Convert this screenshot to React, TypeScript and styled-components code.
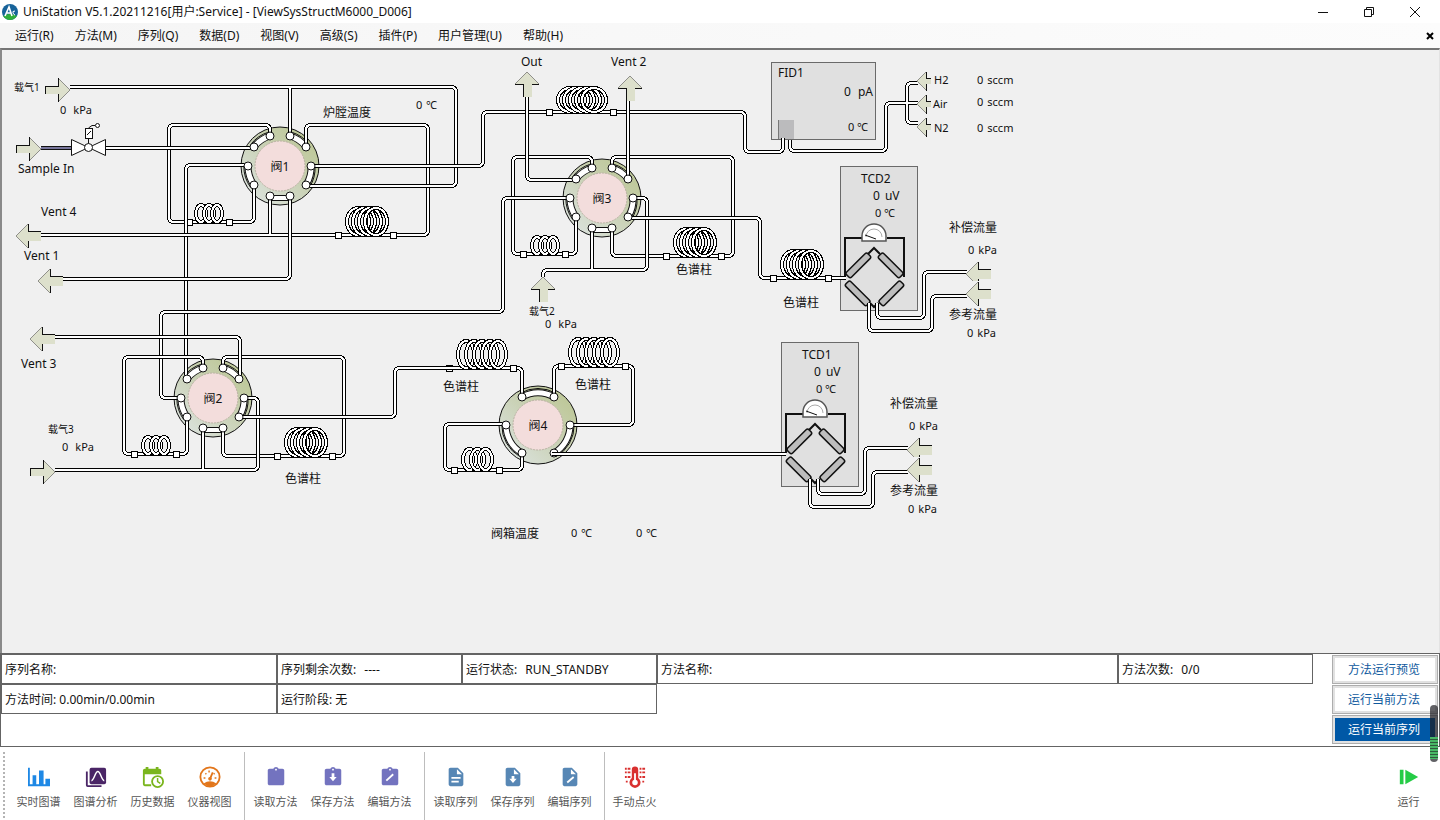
import React from "react";
import styled, { createGlobalStyle, css } from "styled-components";

const GlobalStyle = createGlobalStyle`
  * { box-sizing: border-box; }
  body {
    margin: 0;
    background: #fff;
    color: #111;
    font-family: "Noto Sans", "Noto Sans CJK SC", sans-serif;
    font-size: 12px;
    line-height: 16px;
  }
  button { font: inherit; color: inherit; cursor: pointer; }
`;

/* ---------- window frame ---------- */

const Window = styled.div`
  display: flex;
  flex-direction: column;
  min-height: 100vh;
`;

const TitleBar = styled.header`
  display: flex;
  align-items: center;
  height: 23px;
  padding-left: 2px;
  background: #fff;
`;

const Title = styled.h1`
  flex: 1;
  margin: 0 0 0 5px;
  font-size: 12px;
  line-height: 16px;
  font-weight: 400;
  white-space: nowrap;
`;

const WindowButton = styled.button`
  display: grid;
  place-items: center;
  width: 46px;
  height: 22px;
  padding: 0;
  border: 0;
  background: none;
`;

const WindowButtons = styled.div`
  display: flex;
  margin-right: 2px;
`;

const MenuBar = styled.nav`
  display: flex;
  align-items: center;
  gap: 1px;
  height: 25px;
  padding: 0 4px 0 5px;
  background: linear-gradient(90deg, #f5f5f5, #fcfcfc);
`;

const MenuButton = styled.button`
  padding: 0 10px;
  border: 0;
  background: none;
  white-space: nowrap;
`;

const CloseView = styled.button`
  display: grid;
  place-items: center;
  width: 12px;
  height: 16px;
  margin-left: auto;
  padding: 0;
  border: 0;
  background: none;
`;

/* ---------- flow diagram ---------- */

const Workspace = styled.main`
  position: relative;
  flex: 1 0 500px;
  border-top: 2px solid #757575;
  border-left: 2px solid #8a8a8a;
  border-right: 1px solid #e3e3e3;
  background: #f0f0f0;
  overflow: hidden;
`;

/* Diagram coordinates of the workspace's inner top left corner. */
const ORIGIN = { x: 2, y: 50 };

type At = { $x: number; $y: number };
const placed = css<At>`
  position: absolute;
  left: ${(p) => p.$x - ORIGIN.x}px;
  top: ${(p) => p.$y - ORIGIN.y}px;
`;

const Drawing = styled.svg`
  position: absolute;
  left: 0;
  top: 0;
`;

const Label = styled.span<At & { $size?: number }>`
  ${placed}
  margin-top: -8px;
  font-size: ${(p) => p.$size ?? 12}px;
  white-space: nowrap;
`;

const ValveName = styled(Label)`
  width: 50px;
  margin-left: -25px;
  text-align: center;
`;

const ReadingBox = styled.span<At & { $gap: number; $size: number }>`
  ${placed}
  display: flex;
  gap: ${(p) => p.$gap}px;
  margin-top: -8px;
  font-size: ${(p) => p.$size}px;
  white-space: nowrap;
`;

const Detector = styled.section<At & { $w: number; $h: number }>`
  ${placed}
  width: ${(p) => p.$w}px;
  height: ${(p) => p.$h}px;
  border: 1px solid #6a6a6a;
  background: #e0e0e0;
`;

type ReadingProps = { x: number; y: number; unit: string; gap?: number; size?: number };
const Reading = ({ x, y, unit, gap = 4, size = 11 }: ReadingProps) => (
  <ReadingBox $x={x} $y={y} $gap={gap} $size={size}>
    <span>0</span>
    <span>{unit}</span>
  </ReadingBox>
);

type Point = [number, number];

/* Turns a list of corners into a path whose bends are rounded. */
const bend = (pts: Point[], r = 5) => {
  let d = `M${pts[0][0]} ${pts[0][1]}`;
  for (let i = 1; i < pts.length - 1; i++) {
    const [px, py] = pts[i - 1];
    const [x, y] = pts[i];
    const [nx, ny] = pts[i + 1];
    const a = Math.min(r, Math.hypot(px - x, py - y));
    const b = Math.min(r, Math.hypot(nx - x, ny - y));
    d += `L${x + Math.sign(px - x) * a} ${y + Math.sign(py - y) * a}`;
    d += `Q${x} ${y} ${x + Math.sign(nx - x) * b} ${y + Math.sign(ny - y) * b}`;
  }
  const [ex, ey] = pts[pts.length - 1];
  return `${d}L${ex} ${ey}`;
};

/* Lines of one pipe share their inside, so branches open into each other. */
const Pipe = ({ lines }: { lines: Point[][] }) => (
  <g fill="none">
    {lines.map((l, i) => (
      <path key={i} d={bend(l)} stroke="#000" strokeWidth="4" />
    ))}
    {lines.map((l, i) => (
      <path key={i} d={bend(l)} stroke="#fff" strokeWidth="2" />
    ))}
  </g>
);

type CoilProps = { x: number; y: number; w: number; h: number; rings: number; ring: number };
const Coil = ({ x, y, w, h, rings, ring }: CoilProps) => {
  const step = (w - ring) / (rings - 1);
  return (
    <g fill="none">
      {Array.from({ length: rings }, (_, i) => {
        const e = {
          cx: x + ring / 2 + i * step,
          cy: y + h / 2,
          rx: ring / 2 - 2,
          ry: h / 2 - 2,
        };
        return (
          <g key={i}>
            <ellipse {...e} stroke="#000" strokeWidth="4" />
            <ellipse {...e} stroke="#fff" strokeWidth="2" />
          </g>
        );
      })}
    </g>
  );
};

const Joint = ({ x, y }: { x: number; y: number }) => (
  <rect x={x - 2.5} y={y - 2.5} width="6" height="6" fill="#fff" stroke="#000" />
);

type Dir = "left" | "right" | "up";
const Arrow = ({ x, y, dir, clip }: { x: number; y: number; dir: Dir; clip?: boolean }) => {
  const h = clip ? 19 : 24;
  if (dir === "right")
    return (
      <g transform={`translate(${x} ${y})`}>
        <path d="M0 8H13V0L25 12L13 24V16H0Z" fill="#dde0cc" />
        <path d="M13 0L25 12L13 24" fill="none" stroke="#8f8f8a" />
        <path d="M.5 16V8.500H13.500V0M13.500 16V24" fill="none" stroke="#111" />
      </g>
    );
  if (dir === "left")
    return (
      <g transform={`translate(${x} ${y})`}>
        <path d={clip ? "M0 12L12 0V7H25V17H12V19H7Z" : "M0 12L12 0V7H25V17H12V24Z"} fill="#dde0cc" />
        <path d={clip ? "M12 0L0 12L7 19" : "M12 0L0 12L12 24"} fill="none" stroke="#8f8f8a" />
        <path d={`M12.500 0V7.500H25M12.500 17V${h}`} fill="none" stroke="#111" />
      </g>
    );
  return (
    <g transform={`translate(${x} ${y})`}>
      <path d="M12 0L24 12H17V25H8V12H0Z" fill="#dde0cc" />
      <path d="M0 12L12 0L24 12" fill="none" stroke="#8f8f8a" />
      <path d="M0 12.500H8.500V25M17 12.500H24" fill="none" stroke="#111" />
    </g>
  );
};

const SmallArrow = ({ y }: { y: number }) => (
  <g transform={`translate(917 ${y})`}>
    <path d="M0 9L9 0V6H14V12H9V19Z" fill="#dde0cc" />
    <path d="M9 0L0 9L9 18" fill="none" stroke="#8f8f8a" />
    <path d="M9.500 0V6.500H14M9.500 12V19" fill="none" stroke="#111" />
  </g>
);

const TEN_PORTS: Point[] = [
  [-10, -30], [10, -30], [26, -19], [31, 0], [26, 19],
  [10, 30], [-10, 30], [-26, 19], [-32, 0], [-26, -19],
];
const TEN_SLOTS = [[9, 0], [1, 2], [3, 4], [7, 8]];
const SIX_PORTS: Point[] = [[-16, -28], [16, -28], [32, 0], [16, 28], [-16, 28], [-32, 0]];
const SIX_SLOTS = [[0, 1], [2, 3], [4, 5]];

const Valve = ({ x, y, six }: { x: number; y: number; six?: boolean }) => {
  const ports = six ? SIX_PORTS : TEN_PORTS;
  const slots = six ? SIX_SLOTS : TEN_SLOTS;
  const arc = (a: Point, b: Point, k: number, r: number) =>
    `M${a[0] * k} ${a[1] * k}A${r} ${r} 0 0 1 ${b[0] * k} ${b[1] * k}`;
  return (
    <g transform={`translate(${x} ${y})`} fill="none">
      <circle r="39" fill="url(#body)" stroke="#111" />
      {slots.map(([a, b], i) => (
        <g key={i}>
          <path d={arc(ports[a], ports[b], 1.13, 36)} stroke="#111" />
          <path d={arc(ports[a], ports[b], 1, 32)} stroke="#111" strokeWidth="7" />
          <path d={arc(ports[a], ports[b], 1, 32)} stroke="#fff" strokeWidth="5" />
        </g>
      ))}
      {!six && <rect x="-8" y="29.500" width="16" height="5" fill="#fff" stroke="#111" />}
      <circle r="25" fill="#f3dddc" stroke="#bdb3a6" strokeDasharray="2 1" />
    </g>
  );
};

const Ports = ({ x, y, six }: { x: number; y: number; six?: boolean }) => (
  <g fill="#fff" stroke="#111">
    {(six ? SIX_PORTS : TEN_PORTS).map(([dx, dy], i) => (
      <circle key={i} cx={x + dx} cy={y + dy} r="4" />
    ))}
  </g>
);

/* Measuring bridge of a thermal conductivity detector with its meter. */
const Bridge = ({ x, y }: { x: number; y: number }) => (
  <g transform={`translate(${x} ${y})`} stroke="#111" fill="none" shapeRendering="auto">
    <path d="M22 72H5V111M47 72H64V111" strokeWidth="2" />
    <path d="M28 88L34 82L40 88M30 137L34 141L38 137" strokeWidth="2" />
    {[[18, 99, -45], [51, 99, 45], [18, 127, 45], [51, 127, -45]].map(([cx, cy, a]) => (
      <rect
        key={`${cx}-${cy}`}
        x="-15"
        y="-3"
        width="30"
        height="7"
        rx="2"
        fill="#bdbdbd"
        strokeWidth="1.500"
        transform={`translate(${cx} ${cy}) rotate(${a})`}
      />
    ))}
    <path d="M22 75V70A12 12 0 0 1 46 70V75Z" fill="#fff" stroke="#555" strokeWidth="1.500" />
    <path d="M26 71A8 8 0 0 1 42 71" stroke="#aaa" />
    <path d="M25 69L36 73" />
  </g>
);

const JOINTS: Point[] = [
  [229, 222], [338, 235], [393, 235], [549, 112], [613, 112],
  [523, 254], [565, 254], [721, 256], [666, 256], [773, 278], [828, 278],
  [134, 454], [176, 454], [332, 456], [277, 456], [513, 368],
  [561, 366], [625, 366], [454, 470], [499, 470],
];

const FlowDrawing = () => (
  <Drawing width="1040" height="480" viewBox="2 50 1040 480" shapeRendering="crispEdges" aria-hidden="true">
    <defs>
      <linearGradient id="body" x1="0" y1="1" x2="1" y2="0">
        <stop offset="0.150" stopColor="#d9e0d8" />
        <stop offset="0.550" stopColor="#c8d0b2" />
        <stop offset="1" stopColor="#b9c48d" />
      </linearGradient>
    </defs>

    <rect x="778" y="120" width="16" height="19" fill="#bbbbbd" />
    <path d="M778.500 120V139" stroke="#777" />

    <g shapeRendering="auto">
      <Valve x={280} y={166} />
      <Valve x={213} y={398} />
      <Valve x={602} y={198} />
      <Valve x={538} y={425} six />
    </g>
    <Bridge x={840} y={166} />
    <Bridge x={781} y={342} />

    {/* joints that a later pipe runs over */}
    <Joint x={449} y={368} />

    <Pipe lines={[[[270, 137], [270, 125], [169, 125], [169, 222], [254, 222], [254, 187]]]} />
    <Joint x={189} y={222} />
    <Pipe lines={[[[246, 165], [186, 165], [186, 382]]]} />
    <Pipe lines={[[[41, 235], [428, 235], [428, 125], [306, 125], [306, 147]], [[270, 198], [270, 236]]]} />
    <Pipe lines={[[[290, 198], [290, 279], [61, 279]]]} />
    <Pipe lines={[[[70, 87], [456, 87], [456, 186], [306, 186]], [[290, 87], [290, 136]]]} />
    <Pipe lines={[[[105, 148], [253, 148]]]} />
    <Pipe lines={[[[312, 166], [483, 166], [483, 112], [745, 112], [745, 152], [783, 152], [783, 138]]]} />
    <Pipe
      lines={[
        [[790, 140], [790, 151], [886, 151], [886, 103], [918, 103]],
        [[918, 83], [907, 83], [907, 123], [918, 123]],
      ]}
    />

    <Pipe lines={[[[592, 168], [592, 157], [513, 157], [513, 254], [576, 254], [576, 219]]]} />
    <Pipe lines={[[[612, 168], [612, 157], [733, 157], [733, 256], [612, 256], [612, 230]]]} />
    <Pipe lines={[[[527, 97], [527, 180], [574, 180]]]} />
    <Pipe lines={[[[628, 101], [628, 180]]]} />
    <Pipe lines={[[[635, 198], [647, 198], [647, 270], [543, 270], [543, 277]], [[592, 230], [592, 271]]]} />
    <Pipe lines={[[[628, 218], [760, 218], [760, 278], [846, 278]]]} />
    <Pipe lines={[[[569, 198], [503, 198], [503, 312], [161, 312], [161, 398], [180, 398]]]} />

    <Pipe lines={[[[203, 368], [203, 357], [124, 357], [124, 454], [187, 454], [187, 419]]]} />
    <Pipe lines={[[[223, 368], [223, 357], [344, 357], [344, 456], [223, 456], [223, 430]]]} />
    <Pipe lines={[[[55, 337], [240, 337], [240, 381]]]} />
    <Pipe lines={[[[246, 398], [258, 398], [258, 470], [55, 470]], [[203, 430], [203, 471]]]} />
    <Pipe lines={[[[239, 417], [395, 417], [395, 368], [522, 368], [522, 396]]]} />

    <Pipe lines={[[[554, 396], [554, 366], [633, 366], [633, 425], [571, 425]]]} />
    <Pipe lines={[[[505, 424], [445, 424], [445, 470], [522, 470], [522, 454]]]} />
    <g shapeRendering="auto">
      <Ports x={280} y={166} />
      <Ports x={213} y={398} />
      <Ports x={602} y={198} />
      <Ports x={538} y={425} six />
    </g>
    <Pipe lines={[[[552, 454], [786, 454]]]} />

    {[[0, 0], [59, -176]].map(([dx, dy]) => (
      <g key={dx} transform={`translate(${dx} ${dy})`}>
        <Pipe lines={[[[810, 479], [810, 507], [873, 507], [873, 472], [908, 472]]]} />
        <Pipe lines={[[[818, 479], [818, 494], [865, 494], [865, 448], [908, 448]]]} />
        <Arrow x={907} y={438} dir="left" clip />
        <Arrow x={907} y={458} dir="left" />
      </g>
    ))}

    {JOINTS.map(([x, y]) => (
      <Joint key={`${x}-${y}`} x={x} y={y} />
    ))}

    <Coil x={194} y={203} w={30} h={21} rings={3} ring={14} />
    <Coil x={345} y={206} w={44} h={31} rings={4} ring={26} />
    <Coil x={556} y={86} w={52} h={28} rings={5} ring={28} />
    <Coil x={530} y={235} w={30} h={21} rings={3} ring={14} />
    <Coil x={673} y={227} w={44} h={31} rings={4} ring={26} />
    <Coil x={780} y={249} w={44} h={31} rings={4} ring={26} />
    <Coil x={141} y={435} w={30} h={21} rings={3} ring={14} />
    <Coil x={284} y={427} w={44} h={31} rings={4} ring={26} />
    <Coil x={456} y={339} w={52} h={31} rings={5} ring={20} />
    <Coil x={568} y={337} w={52} h={31} rings={5} ring={20} />
    <Coil x={461} y={447} w={33} h={25} rings={3} ring={17} />

    <Arrow x={45} y={78} dir="right" />
    <Arrow x={16} y={137} dir="right" />
    <Arrow x={30} y={460} dir="right" />
    <Arrow x={16} y={224} dir="left" />
    <Arrow x={38} y={269} dir="left" />
    <Arrow x={30} y={327} dir="left" />
    <Arrow x={515} y={72} dir="up" />
    <Arrow x={618} y={76} dir="up" />
    <Arrow x={531} y={277} dir="up" />
    <SmallArrow y={72} />
    <SmallArrow y={95} />
    <SmallArrow y={118} />

    <path d="M41 146.500H71M41 149.500H71" stroke="#111" />
    <path d="M41 148H71" stroke="#77759b" strokeWidth="2" />
    <g fill="#fff" stroke="#111" shapeRendering="auto">
      <path d="M71.500 139.500L105.500 155.500V139.500L71.500 155.500Z" />
      <path d="M88.500 144V128L92 125.500H95" fill="none" />
      <rect x="85.500" y="128.500" width="7" height="10" />
      <path d="M87 135L91 131" />
      <circle cx="97.500" cy="125.500" r="2" />
      <circle cx="88.500" cy="147.500" r="4" />
    </g>
  </Drawing>
);

/* Text beside the two thermal conductivity detectors. */
const ConductivityTexts = ({ name, x, y }: { name: string; x: number; y: number }) => (
  <>
    <Label $x={x + 21} $y={y + 13}>{name}</Label>
    <Reading x={x + 33} y={y + 30} unit="uV" gap={5} size={12} />
    <Reading x={x + 35} y={y + 47} unit="℃" gap={3} />
    <Label $x={x + 109} $y={y + 62}>补偿流量</Label>
    <Reading x={x + 128} y={y + 84} unit="kPa" />
    <Label $x={x + 109} $y={y + 149}>参考流量</Label>
    <Reading x={x + 127} y={y + 167} unit="kPa" />
  </>
);

const LABELS: { t: string; x: number; y: number; size?: number }[] = [
  { t: "载气1", x: 14, y: 87, size: 10 },
  { t: "Sample In", x: 18, y: 169 },
  { t: "Vent 4", x: 41, y: 212 },
  { t: "Vent 1", x: 24, y: 256 },
  { t: "Vent 3", x: 21, y: 364 },
  { t: "炉膛温度", x: 323, y: 113 },
  { t: "Out", x: 521, y: 62 },
  { t: "Vent 2", x: 611, y: 62 },
  { t: "色谱柱", x: 676, y: 270 },
  { t: "色谱柱", x: 783, y: 303 },
  { t: "色谱柱", x: 443, y: 387 },
  { t: "色谱柱", x: 575, y: 385 },
  { t: "色谱柱", x: 285, y: 479 },
  { t: "载气2", x: 529, y: 311, size: 10 },
  { t: "载气3", x: 48, y: 429, size: 10 },
  { t: "阀箱温度", x: 491, y: 534 },
  { t: "H2", x: 934, y: 80, size: 11 },
  { t: "Air", x: 933, y: 104, size: 11 },
  { t: "N2", x: 934, y: 128, size: 11 },
  { t: "FID1", x: 778, y: 73 },
];

/* ---------- run status ---------- */

const StatusPanel = styled.section`
  display: flex;
  border: 1px solid #646464;
  background: #fff;
`;

const StatusRows = styled.div`
  flex: 1;
  min-width: 0;
  padding-bottom: 32px;
`;

const StatusRow = styled.div`
  display: flex;
`;

const StatusCell = styled.div<{ $w?: number }>`
  flex: ${(p) => (p.$w ? `0 0 ${p.$w}px` : "1 1 0")};
  display: flex;
  align-items: center;
  gap: 5px;
  height: 30px;
  padding: 2px 0 0 3px;
  border: 1px solid #646464;
  white-space: pre;
  overflow: hidden;
`;

const RunButtons = styled.div`
  display: flex;
  flex-direction: column;
  gap: 1px;
  width: 106px;
  margin: 1px 1px 0 19px;
`;

const RunButton = styled.button<{ $active?: boolean }>`
  height: 29px;
  padding: 0 2px 0 0;
  border: 1px solid #adadad;
  background: ${(p) => (p.$active ? "#0058a6" : "#fff")};
  box-shadow: inset 0 0 0 2px #e1e1e1;
  color: ${(p) => (p.$active ? "#fff" : "#0f5a9e")};
`;

/* ---------- tool bar ---------- */

const ToolBar = styled.footer`
  display: flex;
  height: 73px;
  padding: 5px 3px 0;
  background: #fff;
`;

const Grip = styled.div`
  width: 2px;
  margin: 0 3px 0 0;
  background: repeating-linear-gradient(#b4b4b4 0 2px, #fff 2px 4px);
`;

const ToolGroup = styled.div`
  display: flex;
  padding: 0 6px 0 2px;
  border-right: 1px solid #bdbdbd;
  &:last-of-type { border: 0; margin-left: auto; padding: 0; }
`;

const OpenGroup = styled(ToolGroup)`
  border-right: 0;
  padding-left: 1px;
`;

const ToolButton = styled.button`
  display: flex;
  flex-direction: column;
  align-items: center;
  gap: 6px;
  width: 57px;
  padding: 14px 0 0;
  border: 0;
  background: none;
  color: #555;
  font-size: 11px;
  white-space: nowrap;
`;

const LevelMeter = styled.div`
  position: absolute;
  right: 2px;
  bottom: 58px;
  width: 8px;
  height: 57px;
  border-radius: 4px;
  background:
    repeating-linear-gradient(#49b866 0 2px, #2f5a3c 2px 3px) 0 32px / 8px 22px no-repeat,
    rgba(30, 30, 35, 0.700);
`;

const Icon = ({ color, children }: { color: string; children: React.ReactNode }) => (
  <svg width="22" height="22" viewBox="0 0 24 24" fill={color} aria-hidden="true">
    {children}
  </svg>
);

const CLIP =
  "M19 3h-4.180C14.400 1.840 13.300 1 12 1s-2.400.84-2.820 2H5c-1.100 0-2 .9-2 2v14c0 1.100.9 2 2 2h14c1.100 0 2-.9 2-2V5c0-1.100-.9-2-2-2zm-7 0c.55 0 1 .45 1 1s-.45 1-1 1-1-.45-1-1 .45-1 1-1z";
const FILE = "M14 2H6c-1.100 0-2 .9-2 2v16c0 1.100.9 2 2 2h12c1.100 0 2-.9 2-2V8l-6-6zm-1 7V3.500L18.500 9H13z";

const ICONS: Record<string, React.ReactNode> = {
  bars: (
    <Icon color="#1e88e5">
      <path d="M0 2H2V20H5V10H9V20H12V5H17V20H19V14H24V22H0Z" />
    </Icon>
  ),
  analysis: (
    <Icon color="#4a2566">
      <path d="M1 6H3V21H18V23H3Q1 23 1 21Z" />
      <rect x="5" y="2" width="18" height="18" rx="2" />
      <path d="M7 16C10 16 11 6 14 6S18 16 21 16" fill="none" stroke="#fff" strokeWidth="1.600" />
    </Icon>
  ),
  history: (
    <Icon color="#7ab51d">
      <path d="M1 5Q1 3 3 3H4V1H7V3H15V1H18V3H19Q21 3 21 5V9H3V20H10V22H3Q1 22 1 20Z" />
      <circle cx="17" cy="17" r="6" fill="#fff" stroke="#7ab51d" strokeWidth="2" />
      <path d="M17 13V17L20 19" fill="none" stroke="#7ab51d" strokeWidth="1.600" />
    </Icon>
  ),
  gauge: (
    <Icon color="#e2761b">
      <circle cx="12" cy="12" r="10.500" fill="none" stroke="#e2761b" strokeWidth="2" />
      <path d="M5 19Q12 14 19 19Q12 25 5 19Z" />
      <circle cx="12" cy="14" r="2" />
      <path d="M12 14L15 7" stroke="#e2761b" strokeWidth="2" />
      <path d="M5 13H7M17 13H19M7 8L8 9M11 5V7M17 8L16 9" stroke="#e2761b" strokeWidth="1.600" />
    </Icon>
  ),
  clip: (
    <Icon color="#7373bf"><path d={CLIP} /></Icon>
  ),
  clipSave: (
    <Icon color="#7373bf">
      <path d={CLIP} />
      <path d="M10.500 8H13.500V12H16L12 16.500L8 12H10.500Z" fill="#fff" />
    </Icon>
  ),
  clipEdit: (
    <Icon color="#7373bf">
      <path d={CLIP} />
      <path d="M8 16L15.500 9" fill="none" stroke="#fff" strokeWidth="2" />
    </Icon>
  ),
  file: (
    <Icon color="#5787b5">
      <path d={FILE} />
      <path d="M7 13H17M7 17H15" stroke="#fff" strokeWidth="2" />
    </Icon>
  ),
  fileSave: (
    <Icon color="#5787b5">
      <path d={FILE} />
      <path d="M10.500 11H13.500V14H16L12 18.500L8 14H10.500Z" fill="#fff" />
    </Icon>
  ),
  fileEdit: (
    <Icon color="#5787b5">
      <path d={FILE} />
      <path d="M9 18L16 12" stroke="#fff" strokeWidth="2" />
    </Icon>
  ),
  ignite: (
    <Icon color="#d9302f">
      <path d="M8.500 4A3.500 3.500 0 0 1 15.500 4V13A6 6 0 1 1 8.500 13Z" />
      <circle cx="12" cy="18" r="3" fill="#fff" />
      <path d="M12 8V17" stroke="#fff" strokeWidth="2" />
      <path
        d="M1 3H7M1 7H7M1 12H7M2 17H4M17 3H23M17 7H23M17 12H23M20 17H22"
        stroke="#d9302f"
        strokeWidth="2"
        strokeDasharray="2 1 6"
      />
    </Icon>
  ),
  run: (
    <Icon color="#25cc46">
      <path d="M2 4H6V20H2ZM8 4L22 12L8 20Z" />
    </Icon>
  ),
};

const GROUPS: [string, string][][] = [
  [["bars", "实时图谱"], ["analysis", "图谱分析"], ["history", "历史数据"], ["gauge", "仪器视图"]],
  [["clip", "读取方法"], ["clipSave", "保存方法"], ["clipEdit", "编辑方法"]],
  [["file", "读取序列"], ["fileSave", "保存序列"], ["fileEdit", "编辑序列"]],
];

const Tool = ({ icon, text }: { icon: string; text: string }) => (
  <ToolButton type="button">
    {ICONS[icon]}
    {text}
  </ToolButton>
);

const MENUS = [
  "运行(R)", "方法(M)", "序列(Q)", "数据(D)", "视图(V)",
  "高级(S)", "插件(P)", "用户管理(U)", "帮助(H)",
];

const Logo = () => (
  <svg width="16" height="16" viewBox="0 0 16 16" aria-hidden="true">
    <circle cx="8" cy="8" r="8" fill="#17639a" />
    <path d="M1 12Q8 8 15 12Q12 16 8 16T1 12Z" fill="#2fae3b" />
    <path d="M3 12L7 3L10 12M5 9H9" fill="none" stroke="#fff" strokeWidth="1.600" />
    <path d="M13 7Q10 7 11 9T13 11" fill="none" stroke="#fff" />
  </svg>
);

export default function App() {
  return (
    <Window>
      <GlobalStyle />
      <TitleBar>
        <Logo />
        <Title>UniStation V5.1.20211216[用户:Service] - [ViewSysStructM6000_D006]</Title>
        <WindowButtons>
          <WindowButton type="button" aria-label="最小化">
            <svg width="12" height="12"><path d="M1 6.500H11" stroke="#111" /></svg>
          </WindowButton>
          <WindowButton type="button" aria-label="还原">
            <svg width="12" height="12" fill="none" stroke="#111">
              <path d="M1.500 3.500H8.500V10.500H1.500ZM3.500 3V1.500H10.500V8.500H9" />
            </svg>
          </WindowButton>
          <WindowButton type="button" aria-label="关闭">
            <svg width="12" height="12" stroke="#111"><path d="M1 1L11 11M11 1L1 11" /></svg>
          </WindowButton>
        </WindowButtons>
      </TitleBar>
      <MenuBar>
        {MENUS.map((m) => (
          <MenuButton key={m} type="button">{m}</MenuButton>
        ))}
        <CloseView type="button" aria-label="关闭视图">
          <svg width="8" height="8" stroke="#000" strokeWidth="2"><path d="M1 1L7 7M7 1L1 7" /></svg>
        </CloseView>
      </MenuBar>

      <Workspace>
        <Detector $x={771} $y={62} $w={105} $h={78} aria-label="FID1" />
        <Detector $x={840} $y={166} $w={78} $h={145} aria-label="TCD2" />
        <Detector $x={781} $y={342} $w={78} $h={145} aria-label="TCD1" />
        <FlowDrawing />
        {LABELS.map((l) => (
          <Label key={`${l.x}-${l.y}`} $x={l.x} $y={l.y} $size={l.size}>{l.t}</Label>
        ))}
        <ValveName $x={280} $y={167}>阀1</ValveName>
        <ValveName $x={213} $y={399}>阀2</ValveName>
        <ValveName $x={602} $y={199}>阀3</ValveName>
        <ValveName $x={538} $y={426}>阀4</ValveName>
        <Reading x={60} y={110} unit="kPa" gap={7} />
        <Reading x={545} y={324} unit="kPa" gap={7} />
        <Reading x={62} y={447} unit="kPa" gap={7} />
        <Reading x={416} y={105} unit="℃" />
        <Reading x={571} y={533} unit="℃" />
        <Reading x={636} y={533} unit="℃" />
        <Reading x={844} y={92} unit="pA" gap={7} size={12} />
        <Reading x={848} y={127} unit="℃" gap={3} />
        <Reading x={977} y={80} unit="sccm" />
        <Reading x={977} y={102} unit="sccm" />
        <Reading x={977} y={128} unit="sccm" />
        <ConductivityTexts name="TCD2" x={840} y={166} />
        <ConductivityTexts name="TCD1" x={781} y={342} />
      </Workspace>

      <StatusPanel>
        <StatusRows>
          <StatusRow>
            <StatusCell $w={276}>序列名称:</StatusCell>
            <StatusCell $w={185}>序列剩余次数: <span>----</span></StatusCell>
            <StatusCell $w={195}>运行状态: <span>RUN_STANDBY</span></StatusCell>
            <StatusCell>方法名称:</StatusCell>
            <StatusCell $w={195}>方法次数: <span>0/0</span></StatusCell>
          </StatusRow>
          <StatusRow>
            <StatusCell $w={276}>方法时间: 0.00min/0.00min</StatusCell>
            <StatusCell $w={380}>运行阶段: 无</StatusCell>
          </StatusRow>
        </StatusRows>
        <RunButtons>
          <RunButton type="button">方法运行预览</RunButton>
          <RunButton type="button">运行当前方法</RunButton>
          <RunButton type="button" $active>运行当前序列</RunButton>
        </RunButtons>
      </StatusPanel>

      <ToolBar>
        <Grip />
        {GROUPS.map((g, i) => (
          <ToolGroup key={i}>
            {g.map(([icon, text]) => (
              <Tool key={icon} icon={icon} text={text} />
            ))}
          </ToolGroup>
        ))}
        <OpenGroup>
          <Tool icon="ignite" text="手动点火" />
        </OpenGroup>
        <ToolGroup>
          <Tool icon="run" text="运行" />
        </ToolGroup>
      </ToolBar>
      <LevelMeter />
    </Window>
  );
}
